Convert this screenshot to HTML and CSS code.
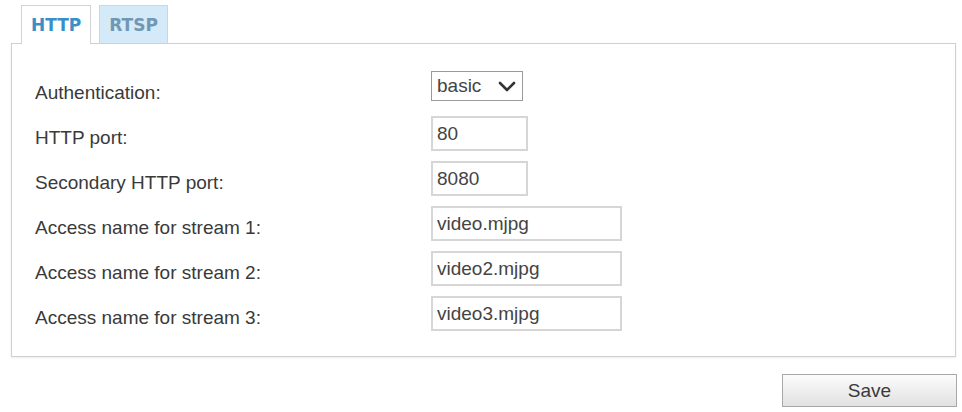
FILE: index.html
```html
<!DOCTYPE html>
<html lang="en">
<head>
  <meta charset="UTF-8">
  <meta name="viewport" content="width=device-width, initial-scale=1.0">
  <title>Network - HTTP</title>
  <link rel="stylesheet" href="styles.css">
</head>
<body>
<div class="tabs">
  <div class="tab active">HTTP</div>
  <div class="tab">RTSP</div>
</div>

<div class="panel">
  <div class="fields">
    <label>Authentication:</label>
    <div class="select">
      <span>basic</span>
      <svg width="18" height="11" viewBox="0 0 18 11"><polyline points="2,2 9,9 16,2" fill="none" stroke="#333" stroke-width="2.6" stroke-linecap="round" stroke-linejoin="round"/></svg>
    </div>

    <label for="httpPort">HTTP port:</label>
    <input type="text" id="httpPort" class="short" value="80">

    <label for="httpPort2">Secondary HTTP port:</label>
    <input type="text" id="httpPort2" class="short" value="8080">

    <label for="stream1">Access name for stream 1:</label>
    <input type="text" id="stream1" class="long" value="video.mjpg">

    <label for="stream2">Access name for stream 2:</label>
    <input type="text" id="stream2" class="long" value="video2.mjpg">

    <label for="stream3">Access name for stream 3:</label>
    <input type="text" id="stream3" class="long" value="video3.mjpg">
  </div>
</div>

<div class="actions">
  <button id="save">Save</button>
</div>
</body>
</html>
```

FILE: styles.css
```css
body {
  font-family: "Liberation Sans", Arial, sans-serif;
  background-color: #ffffff;
  color: #3a3a3a;
  margin: 0;
  padding: 5px 6px 0 11px;
}

.tabs {
  display: flex;
  gap: 8px;
  padding-left: 10px;
}

.tab {
  position: relative;
  height: 38px;
  line-height: 38px;
  padding: 0 9px;
  border: 1px solid #b9dcf2;
  border-bottom: none;
  background-color: #d4eaf8;
  color: #7097b3;
  font-family: "DejaVu Sans", Verdana, sans-serif;
  font-size: 17px;
  font-weight: bold;
  box-sizing: border-box;
}

.tab.active {
  background-color: #fff;
  border-color: #d3d3d3;
  color: #3b8ec6;
  height: 39px;
  margin-bottom: -1px;
}

.panel {
  border: 1px solid #d0d0d0;
  box-shadow: 0 1px 2px rgba(0, 0, 0, 0.08);
  padding: 27px 23px 25px 23px;
}

.fields {
  display: grid;
  grid-template-columns: 396px auto;
  grid-auto-rows: 35px;
  row-gap: 10px;
  align-items: center;
}

.fields label {
  font-size: 19px;
  line-height: 22px;
  padding-top: 8px;
}

.select {
  align-self: start;
  width: 92px;
  height: 30px;
  box-sizing: border-box;
  border: 1px solid #9a9a9a;
  display: flex;
  align-items: center;
  justify-content: space-between;
  padding: 0 6px 0 5px;
  font-size: 19px;
  color: #444;
}

.fields input {
  height: 35px;
  box-sizing: border-box;
  border: 2px solid #d6d6d6;
  padding: 0 4px;
  font-family: "Liberation Sans", Arial, sans-serif;
  font-size: 19px;
  color: #444;
  outline: none;
}

.fields input.short {
  width: 97px;
}

.fields input.long {
  width: 191px;
}

.actions {
  display: flex;
  justify-content: flex-end;
  margin-top: 17px;
  margin-right: -1px;
}

.actions button {
  width: 175px;
  height: 33px;
  border: 1px solid #a8a8a8;
  background: linear-gradient(#fbfbfb, #e2e2e2);
  font-family: "Liberation Sans", Arial, sans-serif;
  font-size: 19px;
  color: #3a3a3a;
  cursor: pointer;
}

.actions button:hover {
  background: linear-gradient(#ffffff, #eaeaea);
}
```
